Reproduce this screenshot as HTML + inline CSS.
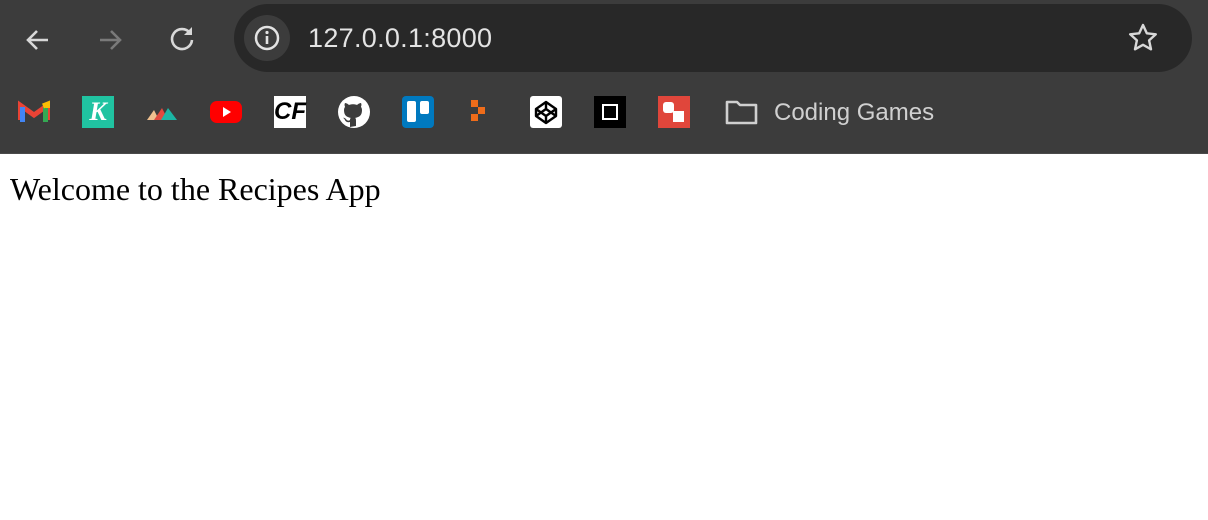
<!DOCTYPE html>
<html><head><style>
body{margin:0;width:1208px;height:520px;overflow:hidden;background:#fff;font-family:"Liberation Sans",sans-serif}
.bar{position:absolute;left:0;top:0;width:1208px;height:153px;background:#3c3c3c;border-bottom:1px solid #4a4a4a}
.omni{position:absolute;left:234px;top:4px;width:958px;height:68px;border-radius:34px;background:#282828}
.info{position:absolute;left:10px;top:11px;width:46px;height:46px;border-radius:50%;background:#3c3c3c}
.url{position:absolute;left:74px;top:19px;font-size:27px;color:#e3e3e3;letter-spacing:.3px}
.ic{position:absolute;top:96px;width:32px;height:32px}
.cg{position:absolute;left:774px;top:99px;font-size:24px;color:#d0d0d0}
.txt{position:absolute;left:10px;top:171px;font-family:"Liberation Serif",serif;font-size:32px;color:#000}
</style></head><body>
<div class="bar">
<svg style="position:absolute;left:22px;top:24px" width="32" height="32" viewBox="0 0 32 32"><path d="M26 16H7M15 7l-9 9 9 9" stroke="#d8d8d8" stroke-width="2.6" fill="none"/></svg>
<svg style="position:absolute;left:94px;top:24px" width="32" height="32" viewBox="0 0 32 32"><path d="M6 16h19M17 7l9 9-9 9" stroke="#7a7a7a" stroke-width="2.6" fill="none"/></svg>
<svg style="position:absolute;left:166px;top:22px" width="32" height="32" viewBox="0 0 32 32"><path d="M24 11A10 10 0 1 0 26 18" stroke="#d8d8d8" stroke-width="2.6" fill="none"/><path d="M26 5v8h-8z" fill="#d8d8d8"/></svg>
<div class="omni"><div class="info"><svg style="position:absolute;left:9px;top:9px" width="28" height="28" viewBox="0 0 28 28"><circle cx="14" cy="14" r="11" stroke="#e3e3e3" stroke-width="2.5" fill="none"/><rect x="12.7" y="12" width="2.6" height="8" fill="#e3e3e3"/><circle cx="14" cy="8.5" r="1.6" fill="#e3e3e3"/></svg></div>
<div class="url">127.0.0.1:8000</div>
<svg style="position:absolute;left:893px;top:18px" width="32" height="32" viewBox="0 0 32 32"><path d="M16 3l3.8 8.3 9 1-6.7 6.1 1.9 8.9L16 22.8 8 27.3l1.9-8.9L3.2 12.3l9-1z" stroke="#d8d8d8" stroke-width="2.4" fill="none" stroke-linejoin="round"/></svg>
</div>
<svg class="ic" style="left:18px" viewBox="0 0 32 32"><path d="M2 24V9l14 10L30 9v15" fill="none" stroke="#ea4335" stroke-width="5"/><path d="M4.5 26V11" stroke="#4285f4" stroke-width="5"/><path d="M27.5 26V11" stroke="#34a853" stroke-width="5"/><path d="M25 10l5-2v4" stroke="#fbbc04" stroke-width="5"/></svg>
<div class="ic" style="left:82px;background:#20c3a1;color:#fff;font:italic bold 26px 'Liberation Serif',serif;text-align:center;line-height:32px">K</div>
<svg class="ic" style="left:146px" viewBox="0 0 32 32"><path d="M1 24l7-10 5 10z" fill="#f0c08f"/><path d="M8 24l8-12 6 12z" fill="#e04a3f"/><path d="M15 24l7-12 9 12z" fill="#1bb6a4"/></svg>
<svg class="ic" style="left:210px" viewBox="0 0 32 32"><rect x="0" y="5" width="32" height="22" rx="7" fill="#f00"/><path d="M13 11v10l8-5z" fill="#fff"/></svg>
<div class="ic" style="left:274px;background:#fff;color:#000;font:italic bold 24px 'Liberation Sans',sans-serif;text-align:center;line-height:32px">CF</div>
<svg class="ic" style="left:338px" viewBox="0 0 32 32"><circle cx="16" cy="16" r="16" fill="#fff"/><path d="M12 31v-5c-4 1-5-2-5-2-1-2-2-2-2-2 1-1 3 1 3 1 1 2 3 2 4 1 0-2 1-2 1-2-4-1-7-2-7-8 0-2 1-3 1-3 0-1-1-2 0-4 2 0 4 2 4 2 2-1 6-1 8 0 0 0 2-2 4-2 1 2 0 3 0 4 0 0 1 1 1 3 0 6-3 7-7 8 1 0 1 2 1 3v5z" fill="#3c3c3c"/></svg>
<svg class="ic" style="left:402px" viewBox="0 0 32 32"><rect width="32" height="32" rx="4" fill="#0079bf"/><rect x="5" y="5" width="9" height="21" rx="2" fill="#fff"/><rect x="18" y="5" width="9" height="13" rx="2" fill="#fff"/></svg>
<svg class="ic" style="left:466px" viewBox="0 0 32 32"><rect x="5" y="4" width="7" height="7" fill="#ef6c1a"/><rect x="12" y="11" width="7" height="7" fill="#ef6c1a"/><rect x="5" y="18" width="7" height="7" fill="#ef6c1a"/></svg>
<svg class="ic" style="left:530px" viewBox="0 0 32 32"><rect width="32" height="32" rx="3" fill="#fff"/><path d="M16 6l10 7v7l-10 7-10-7v-7zM6 13l10 7 10-7M16 6v7M6 20l10-7 10 7M16 20v7" stroke="#000" stroke-width="2.4" fill="none" stroke-linejoin="round"/></svg>
<svg class="ic" style="left:594px" viewBox="0 0 32 32"><rect width="32" height="32" fill="#000"/><rect x="9" y="9" width="14" height="14" fill="none" stroke="#fff" stroke-width="2"/></svg>
<svg class="ic" style="left:658px" viewBox="0 0 32 32"><rect width="32" height="32" fill="#e0463b"/><rect x="5" y="6" width="11" height="11" rx="3" fill="#fff"/><rect x="15" y="15" width="11" height="11" fill="#fff"/></svg>
<svg style="position:absolute;left:725px;top:98px" width="34" height="28" viewBox="0 0 34 28"><path d="M2 4h10l3 3h16v18H2z" stroke="#d0d0d0" stroke-width="2.6" fill="none" stroke-linejoin="round"/></svg>
<div class="cg">Coding Games</div>
</div>
<div class="txt">Welcome to the Recipes App</div>
</body></html>
